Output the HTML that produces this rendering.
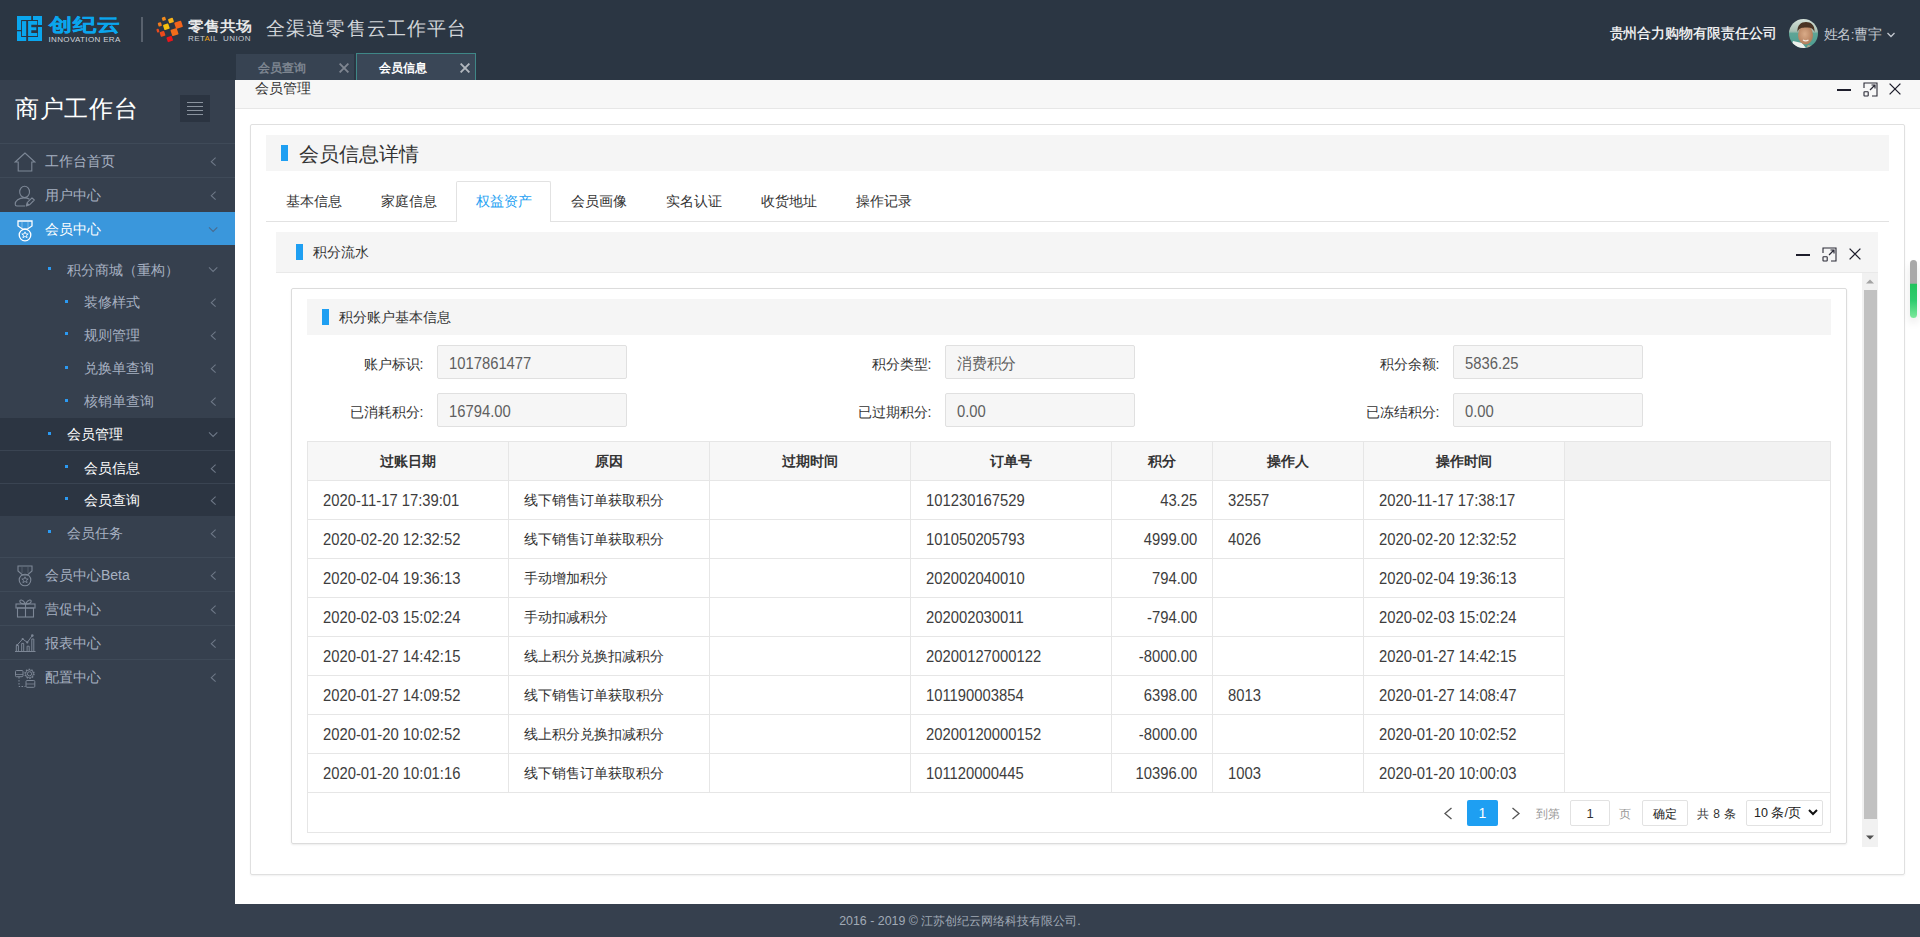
<!DOCTYPE html>
<html><head><meta charset="utf-8">
<style>
*{box-sizing:border-box;margin:0;padding:0}
html,body{width:1920px;height:937px;overflow:hidden}
body{background:#36404e;font-family:"Liberation Sans",sans-serif;font-size:14px;color:#333;position:relative}
.abs{position:absolute}
#hdr{left:0;top:0;width:1920px;height:80px;background:#2b3643}
#side{left:0;top:80px;width:235px;height:857px;background:#36404e}
#main{left:235px;top:80px;width:1685px;height:824px;background:#fff}
#foot{left:0px;top:905px;width:1920px;height:33px;color:#a1aab6;font-size:12.4px;text-align:center;line-height:33px}
.mi{position:absolute;left:0;width:235px;height:34px}
.mi .t1{position:absolute;left:45px;top:1px;line-height:34px;font-size:14px;color:#a7b1c2}
.sm{position:absolute;left:0;width:235px;height:33px}
.sm .t2{position:absolute;top:1.5px;line-height:33px;font-size:14px;color:#a7b1c2}
.sm .t2.w{color:#fff}
.dot{position:absolute;top:15px;width:3px;height:3px;background:#2b9af3}
.chl{position:absolute;left:211px;top:14px;width:6px;height:6px;border-left:1px solid #7d8796;border-bottom:1px solid #7d8796;transform:rotate(45deg)}
.chd{position:absolute;left:210px;top:12px;width:6px;height:6px;border-left:1px solid #7d8796;border-bottom:1px solid #7d8796;transform:rotate(-45deg)}
.lbl{font-size:14px;line-height:34px;text-align:right;color:#333}
.inp{width:190px;height:34px;background:#f6f6f6;border:1px solid #e0e0e0;border-radius:2px;padding-left:11px;font-size:14px;line-height:32px;color:#666}
.th{height:38px;line-height:38px;text-align:center;font-weight:bold;font-size:14px;color:#333}
.td{height:38px;line-height:38px;font-size:14px;color:#333}
.num{color:#3d3d3d;font-size:16px;letter-spacing:0;transform:scaleX(0.925);transform-origin:0 50%}
.numr{transform-origin:100% 50%}
.td.num{margin-top:1px}
.lbl{margin-top:2px;margin-left:1.5px}
.inp .num{position:relative;top:2px;left:-0.5px;color:#5f5f5f}
</style></head><body>
<div id="hdr" class="abs">
  <!-- logo icon -->
  <svg class="abs" style="left:17px;top:16px" width="25" height="25" viewBox="0 0 25 25">
    <g fill="#0aa6ee">
      <path d="M0 0H14.2V4.1H4.1V14H0Z"/>
      <path d="M16 0H25.3V9.1H21V4.1H16Z"/>
      <path d="M0 15.2H4.1V21H9.2V25.1H0Z"/>
      <path d="M21 10.9H25.3V25.1H11.1V21H21Z"/>
      <rect x="5" y="5.1" width="4.2" height="14.9"/>
      <path d="M11.1 5.1H20.2V8.7H14.3V11.3H19.3V14.2H14.3V16.9H20.2V20H11.1Z"/>
    </g>
  </svg>
  <div class="abs" style="left:49px;top:14.5px;font-size:23px;line-height:24px;color:#0aa6ee;font-weight:bold;letter-spacing:1px;-webkit-text-stroke:0.5px #0aa6ee;transform:scaleY(0.78);transform-origin:0 0">创纪云</div>
  <div class="abs" style="left:48.5px;top:35.5px;font-size:8px;line-height:8px;color:#d0d4da;letter-spacing:0.35px">INNOVATION ERA</div>
  <div class="abs" style="left:141px;top:17px;width:2px;height:25px;background:#58616d"></div>
  <!-- retail logo -->
  <svg class="abs" style="left:156px;top:16px" width="28" height="27" viewBox="0 0 28 27"><rect x="6.05" y="1.05" width="3.6" height="3.6" rx="0.8" fill="#f28a1e" transform="rotate(-18 7.85 2.85)"/><rect x="12.45" y="2.25" width="5" height="4.6" rx="0.8" fill="#f9b318" transform="rotate(-18 14.95 4.55)"/><rect x="18.95" y="5.45" width="7.2" height="6.6" rx="0.8" fill="#f2641c" transform="rotate(-18 22.55 8.75)"/><rect x="2.10" y="6.50" width="3.4" height="3.8" rx="0.8" fill="#f07a1e" transform="rotate(-18 3.8 8.4)"/><rect x="7.55" y="8.10" width="5.6" height="5.4" rx="0.8" fill="#f7c10c" transform="rotate(-18 10.35 10.8)"/><rect x="0.70" y="12.85" width="2.4" height="3.6" rx="0.8" fill="#ea4a1e" transform="rotate(-18 1.9 14.65)"/><rect x="4.10" y="15.40" width="4.8" height="5" rx="0.8" fill="#ec4a1c" transform="rotate(-18 6.5 17.9)"/><rect x="15.20" y="12.75" width="6.6" height="6.6" rx="0.8" fill="#f26d1a" transform="rotate(-18 18.5 16.05)"/><rect x="10.95" y="20.40" width="5.6" height="5.2" rx="0.8" fill="#e8161a" transform="rotate(-18 13.75 23)"/></svg>
  <div class="abs" style="left:188px;top:18.5px;font-size:15.5px;line-height:18px;color:#f4f4f4;font-weight:normal;-webkit-text-stroke:0.45px #f4f4f4;letter-spacing:0px;transform:scaleY(0.88);transform-origin:0 0">零售共场</div>
  <div class="abs" style="left:188px;top:34.5px;font-size:8px;line-height:8px;color:#c8ccd2;letter-spacing:0.4px">RET<span style="color:#f0a010">A</span>IL&nbsp; UNION</div>
  <div class="abs" style="left:266px;top:17px;font-family:'Liberation Serif',serif;font-size:18.5px;line-height:24px;color:#d2d5d9;letter-spacing:1.15px;font-weight:300">全渠道零售云工作平台</div>
  <!-- right -->
  <div class="abs" style="left:1609.5px;top:22.5px;font-size:14px;line-height:20px;color:#fff;font-weight:500;letter-spacing:-0.05px;-webkit-text-stroke:0.25px #fff">贵州合力购物有限责任公司</div>
  <svg class="abs" style="left:1789px;top:19px" width="29" height="29" viewBox="0 0 29 29">
    <defs><clipPath id="av"><circle cx="14.5" cy="14.5" r="14.5"/></clipPath>
    <linearGradient id="avbg" x1="0" y1="0" x2="0" y2="1"><stop offset="0" stop-color="#d5e2da"/><stop offset="0.42" stop-color="#a9c0b3"/><stop offset="0.5" stop-color="#5fa596"/><stop offset="1" stop-color="#4b9c90"/></linearGradient>
    <radialGradient id="face" cx="0.45" cy="0.45" r="0.6"><stop offset="0" stop-color="#d9ab88"/><stop offset="1" stop-color="#b07a58"/></radialGradient></defs>
    <g clip-path="url(#av)">
      <rect width="29" height="29" fill="url(#avbg)"/>
      <path d="M4 22L13 24L17 29H2Z" fill="#eef0ec"/>
      <path d="M17 29L19 26L24 27L22 29Z" fill="#a9a48c"/>
      <ellipse cx="16.5" cy="16" rx="7.5" ry="9.5" fill="url(#face)"/>
      <path d="M8.5 13C8 6 12 3 17 3C22 3 26 6 25.5 13C24 9 21 8 17 8.5C13 8.5 10 9 8.5 13Z" fill="#4b3424"/>
      <path d="M14 21C15.5 22 18 22 19.5 21" stroke="#f4ece4" stroke-width="1.2" fill="none"/>
    </g>
  </svg>
  <div class="abs" style="left:1823.5px;top:24.5px;font-size:13.5px;line-height:20px;color:#c3c8d0;letter-spacing:-0.4px">姓名:曹宇</div>
  <svg class="abs" style="left:1887px;top:32px" width="8" height="6" viewBox="0 0 8 6"><path d="M0.5 1L4 4.5L7.5 1" fill="none" stroke="#c3c8d0" stroke-width="1.3"/></svg>
  <!-- tabs -->
  <div class="abs tab" style="left:236px;top:54px;width:118px;height:26px;background:#374352"></div>
  <div class="abs" style="left:258px;top:58.5px;font-size:12px;line-height:18px;color:#7d8590;font-weight:bold">会员查询</div>
  <svg class="abs" style="left:339px;top:63px" width="10" height="10" viewBox="0 0 10 10"><path d="M0.6 0.6L9.4 9.4M9.4 0.6L0.6 9.4" stroke="#7f8691" stroke-width="1.9"/></svg>
  <div class="abs tab" style="left:356px;top:53px;width:120px;height:27px;background:#3a4757;border:1px solid #3f8787;border-bottom:none"></div>
  <div class="abs" style="left:379px;top:58.5px;font-size:12px;line-height:18px;color:#fff;font-weight:bold">会员信息</div>
  <svg class="abs" style="left:460px;top:63px" width="10" height="10" viewBox="0 0 10 10"><path d="M0.6 0.6L9.4 9.4M9.4 0.6L0.6 9.4" stroke="#b3b8bf" stroke-width="1.9"/></svg>
</div>

<div id="side" class="abs">
  <div class="abs" style="left:15px;top:14px;font-size:24.4px;line-height:30px;color:#fff;letter-spacing:0.7px">商户工作台</div>
  <div class="abs" style="left:180px;top:15px;width:30px;height:27px;background:#2b3441">
    <div class="abs" style="left:7px;top:7px;width:16px;height:1px;background:#8a939e"></div>
    <div class="abs" style="left:7px;top:11px;width:16px;height:1px;background:#8a939e"></div>
    <div class="abs" style="left:7px;top:15px;width:16px;height:1px;background:#8a939e"></div>
    <div class="abs" style="left:7px;top:19px;width:16px;height:1px;background:#8a939e"></div>
  </div>
  <!-- menu -->
  <div class="abs" style="left:0;top:63px;width:235px;height:1px;background:#3f4a58"></div>
  <div class="mi" style="top:63px"><span class="t1">工作台首页</span><svg class="abs" style="left:209px;top:14px" width="10" height="10" viewBox="0 0 10 10"><path d="M6.6 0.7L2.3 4.7L6.6 8.6" fill="none" stroke="#6e7887" stroke-width="1.1"/></svg>
    <svg class="abs" style="left:14px;top:9px" width="22" height="20" viewBox="0 0 22 20"><path d="M11 1L1.2 10H4.2V19H17.8V10H20.8Z" fill="none" stroke="#7d8796" stroke-width="1.1" stroke-linejoin="miter"/></svg></div>
  <div class="abs" style="left:0;top:97px;width:235px;height:1px;background:#3f4a58"></div>
  <div class="mi" style="top:97px"><span class="t1">用户中心</span><svg class="abs" style="left:209px;top:14px" width="10" height="10" viewBox="0 0 10 10"><path d="M6.6 0.7L2.3 4.7L6.6 8.6" fill="none" stroke="#6e7887" stroke-width="1.1"/></svg>
    <svg class="abs" style="left:14px;top:8px" width="22" height="22" viewBox="0 0 22 22"><ellipse cx="10.6" cy="6.9" rx="4.9" ry="5.7" fill="none" stroke="#7d8796" stroke-width="1.1"/><path d="M15.5 14.3C14 13.3 12 12.9 10 12.9C5 12.9 1.2 15.8 1.2 19.3C1.2 20.4 1.9 21 2.8 21H11" fill="none" stroke="#7d8796" stroke-width="1.1"/><path d="M12.3 21L13.2 17.6L18 12.8L20.3 15L15.5 19.8Z" fill="none" stroke="#7d8796" stroke-width="1.1" stroke-linejoin="round"/><path d="M12.3 21L13.2 17.6L15.5 19.8Z" fill="#7d8796"/></svg></div>
  <div class="abs" style="left:0;top:132px;width:235px;height:33px;background:#3a97dc"></div>
  <div class="mi" style="top:132px;height:33px"><span class="t1" style="color:#fff;line-height:33px">会员中心</span><svg class="abs" style="left:208px;top:15px" width="10" height="6" viewBox="0 0 10 6"><path d="M1 0.4L5.1 4.4L9.3 0.4" fill="none" stroke="#4a6b8e" stroke-width="1.1"/></svg>
    <svg class="abs" style="left:15.5px;top:7.5px" width="18" height="22" viewBox="0 0 18 22"><path d="M2 1H16V6L11.2 9.2H6.8L2 6Z" fill="none" stroke="#fff" stroke-width="1.3"/><path d="M6 2V8M12 2V8" stroke="#fff" stroke-width="1" opacity="0.35"/><circle cx="9" cy="15" r="5.8" fill="none" stroke="#fff" stroke-width="1.3"/><path d="M9 11.8L10 14H12.2L10.5 15.4L11.1 17.7L9 16.4L6.9 17.7L7.5 15.4L5.8 14H8Z" fill="none" stroke="#fff" stroke-width="0.9"/></svg></div>
  <!-- submenu -->
  <div class="sm" style="top:172px"><b class="dot" style="left:48px"></b><span class="t2" style="left:67px">积分商城（重构）</span><svg class="abs" style="left:208px;top:15px" width="10" height="6" viewBox="0 0 10 6"><path d="M1 0.4L5.1 4.4L9.3 0.4" fill="none" stroke="#6e7887" stroke-width="1.1"/></svg></div>
  <div class="sm" style="top:204.5px"><b class="dot" style="left:65px"></b><span class="t2" style="left:84px">装修样式</span><svg class="abs" style="left:209px;top:13.5px" width="10" height="10" viewBox="0 0 10 10"><path d="M6.6 0.7L2.3 4.7L6.6 8.6" fill="none" stroke="#6e7887" stroke-width="1.1"/></svg></div>
  <div class="sm" style="top:237px"><b class="dot" style="left:65px"></b><span class="t2" style="left:84px">规则管理</span><svg class="abs" style="left:209px;top:13.5px" width="10" height="10" viewBox="0 0 10 10"><path d="M6.6 0.7L2.3 4.7L6.6 8.6" fill="none" stroke="#6e7887" stroke-width="1.1"/></svg></div>
  <div class="sm" style="top:270.5px"><b class="dot" style="left:65px"></b><span class="t2" style="left:84px">兑换单查询</span><svg class="abs" style="left:209px;top:13.5px" width="10" height="10" viewBox="0 0 10 10"><path d="M6.6 0.7L2.3 4.7L6.6 8.6" fill="none" stroke="#6e7887" stroke-width="1.1"/></svg></div>
  <div class="sm" style="top:303.5px"><b class="dot" style="left:65px"></b><span class="t2" style="left:84px">核销单查询</span><svg class="abs" style="left:209px;top:13.5px" width="10" height="10" viewBox="0 0 10 10"><path d="M6.6 0.7L2.3 4.7L6.6 8.6" fill="none" stroke="#6e7887" stroke-width="1.1"/></svg></div>
  <div class="abs" style="left:0;top:338px;width:235px;height:98px;background:#2c3542"></div>
  <div class="abs" style="left:0;top:370px;width:235px;height:1px;background:#3a4452"></div>
  <div class="abs" style="left:0;top:403px;width:235px;height:1px;background:#3a4452"></div>
  <div class="sm" style="top:336.8px"><b class="dot" style="left:48px"></b><span class="t2 w" style="left:67px">会员管理</span><svg class="abs" style="left:208px;top:15px" width="10" height="6" viewBox="0 0 10 6"><path d="M1 0.4L5.1 4.4L9.3 0.4" fill="none" stroke="#6e7887" stroke-width="1.1"/></svg></div>
  <div class="sm" style="top:370px"><b class="dot" style="left:65px"></b><span class="t2 w" style="left:84px">会员信息</span><svg class="abs" style="left:209px;top:13.5px" width="10" height="10" viewBox="0 0 10 10"><path d="M6.6 0.7L2.3 4.7L6.6 8.6" fill="none" stroke="#6e7887" stroke-width="1.1"/></svg></div>
  <div class="sm" style="top:402px"><b class="dot" style="left:65px"></b><span class="t2 w" style="left:84px">会员查询</span><svg class="abs" style="left:209px;top:13.5px" width="10" height="10" viewBox="0 0 10 10"><path d="M6.6 0.7L2.3 4.7L6.6 8.6" fill="none" stroke="#6e7887" stroke-width="1.1"/></svg></div>
  <div class="sm" style="top:435px"><b class="dot" style="left:48px"></b><span class="t2" style="left:67px">会员任务</span><svg class="abs" style="left:209px;top:13.5px" width="10" height="10" viewBox="0 0 10 10"><path d="M6.6 0.7L2.3 4.7L6.6 8.6" fill="none" stroke="#6e7887" stroke-width="1.1"/></svg></div>
  <div class="abs" style="left:0;top:477px;width:235px;height:1px;background:#3f4a58"></div>
  <div class="mi" style="top:477px"><span class="t1">会员中心Beta</span><svg class="abs" style="left:209px;top:14px" width="10" height="10" viewBox="0 0 10 10"><path d="M6.6 0.7L2.3 4.7L6.6 8.6" fill="none" stroke="#6e7887" stroke-width="1.1"/></svg>
    <svg class="abs" style="left:15.5px;top:8px" width="18" height="22" viewBox="0 0 18 22"><path d="M2 1H16V6L11.5 10H6.5L2 6Z" fill="none" stroke="#7d8796" stroke-width="1.1"/><path d="M6 2V8M12 2V8" stroke="#7d8796" stroke-width="1" opacity="0.4"/><circle cx="9" cy="15" r="5.8" fill="none" stroke="#7d8796" stroke-width="1.1"/><path d="M9 11.8L10 14H12.2L10.5 15.4L11.1 17.7L9 16.4L6.9 17.7L7.5 15.4L5.8 14H8Z" fill="none" stroke="#7d8796" stroke-width="0.9"/></svg></div>
  <div class="abs" style="left:0;top:511px;width:235px;height:1px;background:#3f4a58"></div>
  <div class="mi" style="top:511px"><span class="t1">营促中心</span><svg class="abs" style="left:209px;top:14px" width="10" height="10" viewBox="0 0 10 10"><path d="M6.6 0.7L2.3 4.7L6.6 8.6" fill="none" stroke="#6e7887" stroke-width="1.1"/></svg>
    <svg class="abs" style="left:15px;top:7px" width="21" height="20" viewBox="0 0 21 20"><rect x="1" y="6" width="19" height="4" fill="none" stroke="#7d8796" stroke-width="1.1"/><rect x="2.5" y="10" width="16" height="9" fill="none" stroke="#7d8796" stroke-width="1.1"/><path d="M10.5 6V19M10.5 6C8 1 4 1 5 4C5.5 5.5 8 6 10.5 6C13 6 15.5 5.5 16 4C17 1 13 1 10.5 6" fill="none" stroke="#7d8796" stroke-width="1.1"/></svg></div>
  <div class="abs" style="left:0;top:545px;width:235px;height:1px;background:#3f4a58"></div>
  <div class="mi" style="top:545px"><span class="t1">报表中心</span><svg class="abs" style="left:209px;top:14px" width="10" height="10" viewBox="0 0 10 10"><path d="M6.6 0.7L2.3 4.7L6.6 8.6" fill="none" stroke="#6e7887" stroke-width="1.1"/></svg>
    <svg class="abs" style="left:15px;top:8px" width="21" height="20" viewBox="0 0 21 20"><path d="M0 18.5H20.5" stroke="#7d8796" stroke-width="1"/><path d="M1.3 18.5V12.5H3.4V18.5M6.7 18.5V10.4H8.7V18.5M12.1 18.5V13.2H14.2V18.5M16.8 18.5V6H18.8V18.5" fill="none" stroke="#7d8796" stroke-width="1"/><path d="M2.2 12L7.7 6L12.3 9.4L17.3 2.6" fill="none" stroke="#7d8796" stroke-width="1"/><circle cx="2.2" cy="12" r="1.1" fill="#7d8796"/><circle cx="7.7" cy="6" r="1.1" fill="#7d8796"/><circle cx="12.3" cy="9.4" r="1.1" fill="#7d8796"/><circle cx="17.3" cy="2.6" r="1.3" fill="#7d8796"/></svg></div>
  <div class="abs" style="left:0;top:579px;width:235px;height:1px;background:#3f4a58"></div>
  <div class="mi" style="top:579px"><span class="t1">配置中心</span><svg class="abs" style="left:209px;top:14px" width="10" height="10" viewBox="0 0 10 10"><path d="M6.6 0.7L2.3 4.7L6.6 8.6" fill="none" stroke="#6e7887" stroke-width="1.1"/></svg>
    <svg class="abs" style="left:15px;top:7px" width="21" height="23" viewBox="0 0 21 23"><rect x="0.5" y="4.5" width="7.5" height="6.2" rx="1" fill="none" stroke="#7d8796" stroke-width="1"/><path d="M0.5 8.5H8" stroke="#7d8796" stroke-width="0.8"/><path d="M4 11V20.5H10.5" fill="none" stroke="#7d8796" stroke-width="1" stroke-dasharray="1.6 1.4"/><rect x="11" y="14.5" width="8.8" height="6.8" rx="1" fill="none" stroke="#7d8796" stroke-width="1"/><path d="M11 18H19.8" stroke="#7d8796" stroke-width="0.8"/><circle cx="14.5" cy="7.8" r="2.1" fill="none" stroke="#7d8796" stroke-width="1"/><circle cx="14.5" cy="7.8" r="4.5" fill="none" stroke="#7d8796" stroke-width="1.3" stroke-dasharray="1.4 1.43"/><circle cx="14.5" cy="7.8" r="3.9" fill="none" stroke="#7d8796" stroke-width="0.8"/></svg></div>
</div>

<div id="main" class="abs"></div>
<div class="abs" style="left:235px;top:80px;width:1685px;height:29px;background:#f7f7f7;border-bottom:1px solid #e7e7e7"></div>
<div class="abs" style="left:255px;top:80px;font-size:14px;line-height:16px;color:#333">会员管理</div>
<div class="abs" style="left:1837px;top:88.5px;width:14px;height:2.5px;background:#1d1d2b"></div>
<svg class="abs" style="left:1862.5px;top:81.5px" width="15" height="15" viewBox="0 0 15 15"><path d="M1 6V1H14V14H9" fill="none" stroke="#2a2a36" stroke-width="1.1"/><rect x="1" y="9.8" width="4.2" height="4.2" rx="0.5" fill="none" stroke="#2a2a36" stroke-width="1.1"/><path d="M7 8L12 3M8.5 3H12V6.5" fill="none" stroke="#2a2a36" stroke-width="1.2"/></svg>
<svg class="abs" style="left:1889px;top:83px" width="12" height="12" viewBox="0 0 12 12"><path d="M0.6 0.6L11.4 11.4M11.4 0.6L0.6 11.4" stroke="#1d1d2b" stroke-width="1.3"/></svg>
<div class="abs" style="left:250px;top:124px;width:1655px;height:751px;border:1px solid #e0e0e0;border-radius:2px;box-shadow:0 1px 2px rgba(0,0,0,0.06)"></div>
<div class="abs" style="left:266px;top:135px;width:1623px;height:36px;background:#f5f5f5"></div>
<div class="abs" style="left:281px;top:145px;width:7px;height:16px;background:#1e9ff2"></div>
<div class="abs" style="left:298.5px;top:142px;font-size:20px;line-height:24px;color:#333">会员信息详情</div>
<div class="abs" style="left:266px;top:221px;width:1623px;height:1px;background:#e2e2e2"></div>
<div class="abs" style="left:456px;top:181px;width:95px;height:41px;background:#fff;border:1px solid #e2e2e2;border-bottom:none;border-radius:2px 2px 0 0"></div>
<div class="abs" style="left:285.5px;top:192px;font-size:14px;line-height:18px;color:#333">基本信息</div>
<div class="abs" style="left:380.5px;top:192px;font-size:14px;line-height:18px;color:#333">家庭信息</div>
<div class="abs" style="left:475.5px;top:192px;font-size:14px;line-height:18px;color:#1e9ff2">权益资产</div>
<div class="abs" style="left:570.5px;top:192px;font-size:14px;line-height:18px;color:#333">会员画像</div>
<div class="abs" style="left:665.5px;top:192px;font-size:14px;line-height:18px;color:#333">实名认证</div>
<div class="abs" style="left:760.5px;top:192px;font-size:14px;line-height:18px;color:#333">收货地址</div>
<div class="abs" style="left:855.5px;top:192px;font-size:14px;line-height:18px;color:#333">操作记录</div>
<div class="abs" style="left:276px;top:232px;width:1602px;height:41px;background:#f5f5f5;border-bottom:1px solid #e9e9e9"></div>
<div class="abs" style="left:296px;top:244px;width:7px;height:16px;background:#1e9ff2"></div>
<div class="abs" style="left:313px;top:243px;font-size:14px;line-height:18px;color:#333">积分流水</div>
<div class="abs" style="left:1796px;top:253.5px;width:14px;height:2.5px;background:#1d1d2b"></div>
<svg class="abs" style="left:1821.5px;top:246.5px" width="15" height="15" viewBox="0 0 15 15"><path d="M1 6V1H14V14H9" fill="none" stroke="#2a2a36" stroke-width="1.1"/><rect x="1" y="9.8" width="4.2" height="4.2" rx="0.5" fill="none" stroke="#2a2a36" stroke-width="1.1"/><path d="M7 8L12 3M8.5 3H12V6.5" fill="none" stroke="#2a2a36" stroke-width="1.2"/></svg>
<svg class="abs" style="left:1849px;top:248px" width="12" height="12" viewBox="0 0 12 12"><path d="M0.6 0.6L11.4 11.4M11.4 0.6L0.6 11.4" stroke="#1d1d2b" stroke-width="1.3"/></svg>
<div class="abs" style="left:1862px;top:273px;width:16px;height:574px;background:#f1f1f1"></div>
<svg class="abs" style="left:1866px;top:279px" width="8" height="5" viewBox="0 0 8 5"><path d="M0 4.5L4 0.5L8 4.5Z" fill="#a3a3a3"/></svg>
<div class="abs" style="left:1864px;top:290px;width:13px;height:529px;background:#c1c1c1"></div>
<svg class="abs" style="left:1866px;top:835px" width="8" height="5" viewBox="0 0 8 5"><path d="M0 0.5L4 4.5L8 0.5Z" fill="#505050"/></svg>
<div class="abs" style="left:291px;top:288px;width:556px;height:556px;border:1px solid #dcdcdc;border-radius:2px;box-shadow:0 1px 2px rgba(0,0,0,0.08);width:1556px"></div>
<div class="abs" style="left:307px;top:299px;width:1524px;height:36px;background:#f5f5f5"></div>
<div class="abs" style="left:322px;top:309px;width:7px;height:16px;background:#1e9ff2"></div>
<div class="abs" style="left:339px;top:308px;font-size:14px;line-height:18px;color:#333">积分账户基本信息</div>
<div class="abs lbl" style="left:307px;top:345px;width:115px">账户标识:</div>
<div class="abs inp" style="left:437px;top:345px"><span class="num" style="display:inline-block">1017861477</span></div>
<div class="abs lbl" style="left:815px;top:345px;width:115px">积分类型:</div>
<div class="abs inp" style="left:945px;top:345px"><span class="num" style="display:inline-block">消费积分</span></div>
<div class="abs lbl" style="left:1323px;top:345px;width:115px">积分余额:</div>
<div class="abs inp" style="left:1453px;top:345px"><span class="num" style="display:inline-block">5836.25</span></div>
<div class="abs lbl" style="left:307px;top:393px;width:115px">已消耗积分:</div>
<div class="abs inp" style="left:437px;top:393px"><span class="num" style="display:inline-block">16794.00</span></div>
<div class="abs lbl" style="left:815px;top:393px;width:115px">已过期积分:</div>
<div class="abs inp" style="left:945px;top:393px"><span class="num" style="display:inline-block">0.00</span></div>
<div class="abs lbl" style="left:1323px;top:393px;width:115px">已冻结积分:</div>
<div class="abs inp" style="left:1453px;top:393px"><span class="num" style="display:inline-block">0.00</span></div>
<div class="abs" style="left:307px;top:441px;width:1524px;height:392px;border:1px solid #e6e6e6"></div>
<div class="abs" style="left:308px;top:442px;width:1256px;height:38px;background:#f7f7f7"></div>
<div class="abs" style="left:1565px;top:442px;width:265px;height:38px;background:#f2f2f2"></div>
<div class="abs" style="left:308px;top:480px;width:1522px;height:1px;background:#e6e6e6"></div>
<div class="abs" style="left:308px;top:519px;width:1256px;height:1px;background:#e6e6e6"></div>
<div class="abs" style="left:308px;top:558px;width:1256px;height:1px;background:#e6e6e6"></div>
<div class="abs" style="left:308px;top:597px;width:1256px;height:1px;background:#e6e6e6"></div>
<div class="abs" style="left:308px;top:636px;width:1256px;height:1px;background:#e6e6e6"></div>
<div class="abs" style="left:308px;top:675px;width:1256px;height:1px;background:#e6e6e6"></div>
<div class="abs" style="left:308px;top:714px;width:1256px;height:1px;background:#e6e6e6"></div>
<div class="abs" style="left:308px;top:753px;width:1256px;height:1px;background:#e6e6e6"></div>
<div class="abs" style="left:308px;top:792px;width:1522px;height:1px;background:#e6e6e6"></div>
<div class="abs" style="left:508px;top:442px;width:1px;height:350px;background:#e6e6e6"></div>
<div class="abs" style="left:709px;top:442px;width:1px;height:350px;background:#e6e6e6"></div>
<div class="abs" style="left:910px;top:442px;width:1px;height:350px;background:#e6e6e6"></div>
<div class="abs" style="left:1111px;top:442px;width:1px;height:350px;background:#e6e6e6"></div>
<div class="abs" style="left:1212px;top:442px;width:1px;height:350px;background:#e6e6e6"></div>
<div class="abs" style="left:1363px;top:442px;width:1px;height:350px;background:#e6e6e6"></div>
<div class="abs" style="left:1564px;top:442px;width:1px;height:350px;background:#e6e6e6"></div>
<div class="abs th" style="left:308px;top:442px;width:200px">过账日期</div>
<div class="abs th" style="left:509px;top:442px;width:200px">原因</div>
<div class="abs th" style="left:710px;top:442px;width:200px">过期时间</div>
<div class="abs th" style="left:911px;top:442px;width:200px">订单号</div>
<div class="abs th" style="left:1112px;top:442px;width:100px">积分</div>
<div class="abs th" style="left:1213px;top:442px;width:150px">操作人</div>
<div class="abs th" style="left:1364px;top:442px;width:200px">操作时间</div>
<div class="abs td num" style="left:323px;top:481px">2020-11-17 17:39:01</div>
<div class="abs td" style="left:524px;top:481px">线下销售订单获取积分</div>
<div class="abs td num" style="left:926px;top:481px">101230167529</div>
<div class="abs td num numr" style="left:1112px;top:481px;width:100px;text-align:right;padding-right:16px">43.25</div>
<div class="abs td num" style="left:1228px;top:481px">32557</div>
<div class="abs td num" style="left:1379px;top:481px">2020-11-17 17:38:17</div>
<div class="abs td num" style="left:323px;top:520px">2020-02-20 12:32:52</div>
<div class="abs td" style="left:524px;top:520px">线下销售订单获取积分</div>
<div class="abs td num" style="left:926px;top:520px">101050205793</div>
<div class="abs td num numr" style="left:1112px;top:520px;width:100px;text-align:right;padding-right:16px">4999.00</div>
<div class="abs td num" style="left:1228px;top:520px">4026</div>
<div class="abs td num" style="left:1379px;top:520px">2020-02-20 12:32:52</div>
<div class="abs td num" style="left:323px;top:559px">2020-02-04 19:36:13</div>
<div class="abs td" style="left:524px;top:559px">手动增加积分</div>
<div class="abs td num" style="left:926px;top:559px">202002040010</div>
<div class="abs td num numr" style="left:1112px;top:559px;width:100px;text-align:right;padding-right:16px">794.00</div>
<div class="abs td num" style="left:1379px;top:559px">2020-02-04 19:36:13</div>
<div class="abs td num" style="left:323px;top:598px">2020-02-03 15:02:24</div>
<div class="abs td" style="left:524px;top:598px">手动扣减积分</div>
<div class="abs td num" style="left:926px;top:598px">202002030011</div>
<div class="abs td num numr" style="left:1112px;top:598px;width:100px;text-align:right;padding-right:16px">-794.00</div>
<div class="abs td num" style="left:1379px;top:598px">2020-02-03 15:02:24</div>
<div class="abs td num" style="left:323px;top:637px">2020-01-27 14:42:15</div>
<div class="abs td" style="left:524px;top:637px">线上积分兑换扣减积分</div>
<div class="abs td num" style="left:926px;top:637px">20200127000122</div>
<div class="abs td num numr" style="left:1112px;top:637px;width:100px;text-align:right;padding-right:16px">-8000.00</div>
<div class="abs td num" style="left:1379px;top:637px">2020-01-27 14:42:15</div>
<div class="abs td num" style="left:323px;top:676px">2020-01-27 14:09:52</div>
<div class="abs td" style="left:524px;top:676px">线下销售订单获取积分</div>
<div class="abs td num" style="left:926px;top:676px">101190003854</div>
<div class="abs td num numr" style="left:1112px;top:676px;width:100px;text-align:right;padding-right:16px">6398.00</div>
<div class="abs td num" style="left:1228px;top:676px">8013</div>
<div class="abs td num" style="left:1379px;top:676px">2020-01-27 14:08:47</div>
<div class="abs td num" style="left:323px;top:715px">2020-01-20 10:02:52</div>
<div class="abs td" style="left:524px;top:715px">线上积分兑换扣减积分</div>
<div class="abs td num" style="left:926px;top:715px">20200120000152</div>
<div class="abs td num numr" style="left:1112px;top:715px;width:100px;text-align:right;padding-right:16px">-8000.00</div>
<div class="abs td num" style="left:1379px;top:715px">2020-01-20 10:02:52</div>
<div class="abs td num" style="left:323px;top:754px">2020-01-20 10:01:16</div>
<div class="abs td" style="left:524px;top:754px">线下销售订单获取积分</div>
<div class="abs td num" style="left:926px;top:754px">101120000445</div>
<div class="abs td num numr" style="left:1112px;top:754px;width:100px;text-align:right;padding-right:16px">10396.00</div>
<div class="abs td num" style="left:1228px;top:754px">1003</div>
<div class="abs td num" style="left:1379px;top:754px">2020-01-20 10:00:03</div>
<svg class="abs" style="left:1443px;top:807px" width="10" height="13" viewBox="0 0 10 13"><path d="M8.5 1L2 6.5L8.5 12" fill="none" stroke="#555" stroke-width="1.3"/></svg>
<div class="abs" style="left:1467px;top:800px;width:31px;height:26px;background:#1e9ff2;border-radius:2px;color:#fff;font-size:14px;line-height:26px;text-align:center">1</div>
<svg class="abs" style="left:1511px;top:807px" width="10" height="13" viewBox="0 0 10 13"><path d="M1.5 1L8 6.5L1.5 12" fill="none" stroke="#555" stroke-width="1.3"/></svg>
<div class="abs" style="left:1536px;top:805px;font-size:12px;line-height:18px;color:#999">到第</div>
<div class="abs" style="left:1570px;top:800px;width:40px;height:26px;border:1px solid #e2e2e2;border-radius:2px;font-size:13px;line-height:26px;text-align:center;color:#333">1</div>
<div class="abs" style="left:1619px;top:805px;font-size:12px;line-height:18px;color:#999">页</div>
<div class="abs" style="left:1642px;top:800px;width:46px;height:26px;border:1px solid #e2e2e2;border-radius:2px;font-size:12px;line-height:26px;text-align:center;color:#222">确定</div>
<div class="abs" style="left:1697px;top:805px;font-size:12px;line-height:18px;color:#333;letter-spacing:0.5px">共 8 条</div>
<div class="abs" style="left:1746px;top:800px;width:77px;height:26px;border:1px solid #e2e2e2;border-radius:2px;font-size:12.5px;line-height:25px;color:#222;padding-left:7px">10 条/页</div>
<svg class="abs" style="left:1808px;top:809px" width="10" height="7" viewBox="0 0 10 7"><path d="M1 1L5 5L9 1" fill="none" stroke="#111" stroke-width="2"/></svg>
<div class="abs" style="left:1910px;top:260px;width:7px;height:58px;border-radius:4px;box-shadow:0 5px 8px rgba(0,0,0,0.10);background:linear-gradient(#a9a9a9 0,#a9a9a9 40%,#22c55e 42%,#2ecc6f 70%,#7ee89c 100%)"></div>
<div id="foot" class="abs">2016 - 2019 © 江苏创纪云网络科技有限公司.</div>
</body></html>
